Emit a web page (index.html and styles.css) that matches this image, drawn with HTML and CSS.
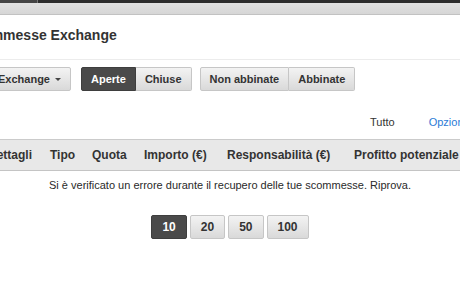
FILE: index.html
```html
<!DOCTYPE html>
<html lang="it">
<head>
    <meta charset="UTF-8">
    <meta name="viewport" content="width=device-width, initial-scale=1.0">
    <title>Scommesse Exchange</title>
    <link rel="stylesheet" href="styles.css">
</head>
<body>
    <div class="topbar"><div class="topbar-tab"></div></div>
    <div class="subbar"></div>

    <div class="page">
        <h1 class="title">Scommesse Exchange</h1>

        <div class="toolbar">
            <button class="btn btn-dropdown">Exchange <span class="caret"></span></button>
            <div class="btn-group">
                <button class="btn active">Aperte</button>
                <button class="btn">Chiuse</button>
            </div>
            <div class="btn-group">
                <button class="btn">Non abbinate</button>
                <button class="btn">Abbinate</button>
            </div>
        </div>

        <div class="filters">
            <span class="filter">Tutto</span>
            <a class="filter link" href="#">Opzioni</a>
        </div>
    </div>

    <div class="table-head">
        <div class="cols">
            <span class="col col-details">Dettagli</span>
            <span class="col col-type">Tipo</span>
            <span class="col col-odds">Quota</span>
            <span class="col col-stake">Importo (€)</span>
            <span class="col col-liability">Responsabilità (€)</span>
            <span class="col col-profit">Profitto potenziale</span>
        </div>
    </div>

    <p class="message">Si è verificato un errore durante il recupero delle tue scommesse. Riprova.</p>

    <div class="pager">
        <button class="btn page-btn active">10</button>
        <button class="btn page-btn">20</button>
        <button class="btn page-btn">50</button>
        <button class="btn page-btn">100</button>
    </div>
</body>
</html>
```

FILE: styles.css
```css
body {
    margin: 0;
    font-family: "Liberation Sans", Arial, sans-serif;
    color: #333;
    background-color: #fff;
    overflow: hidden;
}
.topbar {
    height: 3px;
    background-color: #2e2e2e;
}
.topbar-tab {
    width: 37px;
    height: 3px;
    background-color: #454545;
    border-right: 1px solid #777;
}
.subbar {
    height: 11px;
    background: linear-gradient(#e2e2e2, #d6d6d6);
    border-bottom: 1px solid #c2c2c2;
}
.page {
    margin-left: -40px;
}
.title {
    margin: 0;
    padding: 12px 0 16px 5px;
    font-size: 14px;
    line-height: 16px;
    font-weight: bold;
    color: #333;
    border-bottom: 1px solid #ececec;
}
.toolbar {
    display: flex;
    gap: 8px;
    margin-top: 7px;
    padding-left: 29px;
}
.btn-group {
    display: flex;
}
.btn {
    height: 24px;
    padding: 0 9px;
    font-family: "Liberation Sans", Arial, sans-serif;
    font-size: 11px;
    font-weight: bold;
    line-height: 22px;
    color: #333;
    background: linear-gradient(#f3f3f3, #d9d9d9);
    border: 1px solid #c6c6c6;
    border-radius: 2px;
    cursor: pointer;
}
.btn-group .btn {
    border-radius: 0;
}
.btn-group .btn:first-child {
    border-radius: 2px 0 0 2px;
}
.btn-group .btn:last-child {
    border-left: none;
    border-radius: 0 2px 2px 0;
}
.btn.active {
    color: #fff;
    background: #4a4a4a;
    border-color: #3e3e3e;
}
.btn-dropdown {
    padding: 0 9px 0 8px;
    margin-right: 2px;
}
.caret {
    display: inline-block;
    margin-left: 2px;
    vertical-align: 2px;
    border-left: 3px solid transparent;
    border-right: 3px solid transparent;
    border-top: 3px solid #444;
}
.filters {
    display: flex;
    gap: 34px;
    margin-top: 24px;
    padding-left: 410px;
    font-size: 11px;
    line-height: 14px;
    white-space: nowrap;
}
.filter {
    color: #333;
}
.link {
    color: #2b7bd6;
    text-decoration: none;
}
.table-head {
    margin-top: 10px;
    height: 30px;
    background-color: #e8e8e8;
    border-top: 1px solid #cbcbcb;
    border-bottom: 1px solid #c4c4c4;
}
.cols {
    display: flex;
    margin-left: -12px;
    font-size: 12px;
    font-weight: bold;
    line-height: 30px;
    white-space: nowrap;
}
.col-details { width: 62px; }
.col-type { width: 42px; }
.col-odds { width: 52px; }
.col-stake { width: 83px; }
.col-liability { width: 127px; }
.message {
    margin: 7px 0 0;
    font-size: 11px;
    line-height: 14px;
    text-align: center;
    color: #2a2a2a;
}
.pager {
    display: flex;
    justify-content: center;
    gap: 3px;
    margin-top: 23px;
}
.page-btn {
    padding: 0 10px;
    font-size: 12px;
}
```
